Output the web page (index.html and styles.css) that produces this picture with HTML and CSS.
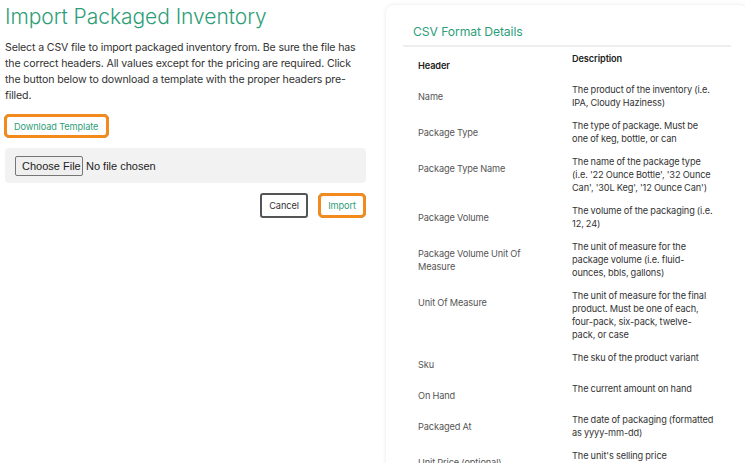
FILE: index.html
```html
<!DOCTYPE html>
<html lang="en">
<head>
<meta charset="UTF-8">
<meta name="viewport" content="width=device-width, initial-scale=1.0">
<title>Import Packaged Inventory</title>
<link rel="stylesheet" href="styles.css">
</head>
<body>
<div class="page">
  <div class="import-form">
    <h1>Import Packaged Inventory</h1>
    <p class="intro">Select a CSV file to import packaged inventory from. Be sure the file has the correct headers. All values except for the pricing are required. Click the button below to download a template with the proper headers pre-filled.</p>
    <button class="btn btn-green btn-focus">Download Template</button>

    <div class="file-box">
      <input type="file" id="csvFile">
    </div>

    <div class="actions">
      <button class="btn btn-dark">Cancel</button>
      <button class="btn btn-green btn-focus">Import</button>
    </div>
  </div>

  <div class="card">
    <div class="card-header">CSV Format Details</div>
    <table class="format-table">
      <tr><th>Header</th><th>Description</th></tr>
      <tr><td>Name</td><td>The product of the inventory (i.e. IPA, Cloudy Haziness)</td></tr>
      <tr><td>Package Type</td><td>The type of package. Must be one of keg, bottle, or can</td></tr>
      <tr><td>Package Type Name</td><td>The name of the package type (i.e. '22 Ounce Bottle', '32 Ounce Can', '30L Keg', '12 Ounce Can')</td></tr>
      <tr><td>Package Volume</td><td>The volume of the packaging (i.e. 12, 24)</td></tr>
      <tr><td>Package Volume Unit Of Measure</td><td>The unit of measure for the package volume (i.e. fluid-ounces, bbls, gallons)</td></tr>
      <tr><td>Unit Of Measure</td><td>The unit of measure for the final product. Must be one of each, four-pack, six-pack, twelve-pack, or case</td></tr>
      <tr><td>Sku</td><td>The sku of the product variant</td></tr>
      <tr><td>On Hand</td><td>The current amount on hand</td></tr>
      <tr><td>Packaged At</td><td>The date of packaging (formatted as yyyy-mm-dd)</td></tr>
      <tr><td>Unit Price (optional)</td><td>The unit's selling price</td></tr>
    </table>
  </div>
</div>
</body>
</html>
```

FILE: styles.css
```css
body {
  margin: 0;
  background: #fff;
  font-family: Inter, "Noto Sans", sans-serif;
  color: #333;
}
.page {
  display: grid;
  grid-template-columns: 361px 362px;
  gap: 20px;
  padding: 5px 0 0 5px;
  width: 760px;
  height: 458px;
  overflow: hidden;
}
h1 {
  margin: 0;
  font-size: 21px;
  font-weight: 300;
  line-height: 24px;
  letter-spacing: -0.05px;
  color: #2e9e78;
}
.intro {
  margin: 11px 0 0;
  font-size: 10.6px;
  letter-spacing: -0.15px;
  line-height: 16px;
  color: #333;
}
.btn {
  font-family: Inter, "Noto Sans", sans-serif;
  font-size: 9.2px;
  letter-spacing: -0.1px;
  white-space: nowrap;
  height: 24px;
  padding: 0 9px;
  background: #fff;
  border-radius: 5px;
  cursor: pointer;
}
.btn-green {
  color: #2e9e78;
  border: 1px solid #2e9e78;
}
.btn-dark {
  color: #333;
  border: 2px solid #555;
  border-radius: 3px;
  height: 25px;
  width: 48px;
  padding: 0;
}
.btn-focus {
  outline: 3px solid #f28a1e;
  outline-offset: -3px;
}
.import-form > .btn {
  margin: 10px 0 0 -1px;
  width: 105px;
  text-align: left;
}
.file-box {
  margin-top: 10px;
  background: #f2f2f2;
  border-radius: 4px;
  height: 35px;
  padding: 0 10px;
  display: flex;
  align-items: center;
}
.file-box input {
  font-family: "Liberation Sans", Arial, sans-serif;
  font-size: 11px;
  color: #222;
}
.file-box input::file-selector-button {
  font-family: "Liberation Sans", Arial, sans-serif;
  font-size: 11px;
  height: 20px;
  width: 68px;
  margin-right: 3px;
  background: #efefef;
  border: 1px solid #767676;
  border-radius: 2px;
  color: #222;
}
.actions {
  margin-top: 10px;
  display: flex;
  justify-content: flex-end;
  gap: 10px;
}
.actions .btn-green {
  width: 48px;
  height: 25px;
  padding: 0;
}
.card {
  background: #fff;
  border-radius: 8px;
  box-shadow: 0 0 4px rgba(0, 0, 0, 0.1);
  padding: 18px 17px 0;
}
.card-header {
  font-size: 12.2px;
  letter-spacing: -0.1px;
  line-height: 18px;
  color: #2e9e78;
  padding: 0 10px 4px;
  border-bottom: 2px solid #eee;
}
.format-table {
  width: 100%;
  border-collapse: collapse;
  font-size: 9.2px;
  letter-spacing: -0.1px;
  word-spacing: -0.3px;
  line-height: 13px;
}
.format-table th,
.format-table td {
  text-align: left;
  vertical-align: top;
  padding: 5px 16.5px 5px 15px;
}
.format-table th {
  font-weight: 600;
  color: #222;
}
.format-table td {
  color: #333;
}
.format-table tr > :first-child {
  width: 124px;
  padding: 12px 15px 6px;
  color: #555;
}
.format-table th:first-child {
  color: #222;
}
```
